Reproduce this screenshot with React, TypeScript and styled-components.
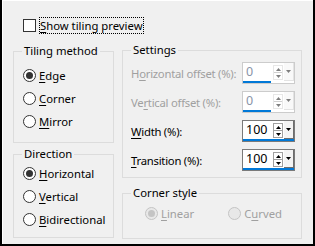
import React from 'react';
import styled, { createGlobalStyle, css } from 'styled-components';

const GlobalStyle = createGlobalStyle`
  html, body {
    margin: 0;
    padding: 0;
    background: #ffffff;
  }
  body {
    font-family: 'Noto Sans', 'Liberation Sans', sans-serif;
    font-size: 11.3px;
    color: #000;
    white-space: nowrap;
  }
`;

const Frame = styled.div`
  box-sizing: border-box;
  width: 315px;
  height: 246px;
  background: #f0f0f0;
  border: 2px solid #000;
  border-top: none;
  box-shadow: inset 1px 1px 0 #ffffff;
  padding: 17px 11px 0 11px;
  display: flex;
  flex-direction: column;
`;

const CheckRow = styled.label`
  display: flex;
  align-items: center;
  gap: 3px;
  height: 17px;
  padding-left: 10px;
`;

const CheckBox = styled.span`
  box-sizing: border-box;
  width: 13px;
  height: 13px;
  border: 1px solid #333;
  background: #fff;
`;

const Focus = styled.span`
  display: flex;
  align-items: center;
  height: 17px;
  padding: 0 1px;
  box-sizing: border-box;
  outline: 1px dotted #000;
  outline-offset: -1px;
  line-height: 17px;
`;

const Columns = styled.div`
  display: flex;
  gap: 8px;
  margin-top: 8px;
`;

const Column = styled.div<{ $width: number; $gap: number; $top?: number }>`
  display: flex;
  flex-direction: column;
  width: ${(p) => p.$width}px;
  gap: ${(p) => p.$gap}px;
  margin-top: ${(p) => p.$top ?? 0}px;
`;

const Group = styled.fieldset<{ $height: number }>`
  box-sizing: border-box;
  margin: 0;
  min-width: 0;
  height: ${(p) => p.$height}px;
  border: 1px solid #dcdcdc;
  padding: 0;
`;

const Legend = styled.legend`
  margin-left: 8px;
  padding: 0 2px;
  line-height: 16px;
  height: 16px;
  white-space: nowrap;
`;

const GroupBody = styled.div<{ $pad: string }>`
  padding: ${(p) => p.$pad};
`;

const Key = styled.span`
  text-decoration: underline;
  text-underline-offset: 2px;
`;

const RadioRow = styled.div<{ $disabled?: boolean }>`
  display: flex;
  align-items: center;
  gap: 3px;
  height: 23px;
  color: ${(p) => (p.$disabled ? '#a0a0a0' : '#000')};
`;

const Circle = styled.span<{ $checked?: boolean; $disabled?: boolean }>`
  box-sizing: border-box;
  flex: none;
  width: 13px;
  height: 13px;
  border-radius: 50%;
  border: 1px solid ${(p) => (p.$disabled ? '#c4c4c4' : '#333')};
  background: ${(p) => (p.$disabled ? '#e8e8e8' : '#fff')};
  display: flex;
  align-items: center;
  justify-content: center;

  &::after {
    content: '';
    width: 7px;
    height: 7px;
    border-radius: 50%;
    background: ${(p) => (p.$disabled ? '#c4c4c4' : '#333')};
    display: ${(p) => (p.$checked ? 'block' : 'none')};
  }
`;

const InlineRadios = styled.div`
  display: flex;
  gap: 34px;
`;

const FieldRow = styled.div<{ $disabled?: boolean }>`
  display: flex;
  align-items: center;
  justify-content: space-between;
  height: 22px;
  color: ${(p) => (p.$disabled ? '#a0a0a0' : '#000')};
`;

const FieldLabel = styled.span`
  letter-spacing: -0.25px;
`;

const FieldStack = styled.div`
  display: flex;
  flex-direction: column;
  gap: 7px;
`;

const Spin = styled.div<{ $disabled?: boolean }>`
  box-sizing: border-box;
  flex: none;
  width: 53px;
  height: 22px;
  border: 1px solid ${(p) => (p.$disabled ? '#cccccc' : '#7a7a7a')};
  background: #fff;
  display: flex;
  flex-direction: column;
`;

const SpinTop = styled.div`
  display: flex;
  flex: 1;
`;

const SpinValue = styled.span<{ $disabled?: boolean }>`
  width: 30px;
  padding-left: 3px;
  box-sizing: border-box;
  font-size: 12.5px;
  line-height: 18px;
  color: ${(p) => (p.$disabled ? '#8a94a8' : '#000')};
`;

const Arrows = styled.span<{ $disabled?: boolean }>`
  box-sizing: border-box;
  width: 10px;
  margin: 2px 0 1px 0;
  border: 1px solid ${(p) => (p.$disabled ? '#d0d0d0' : '#a0a0a0')};
  display: flex;
  flex-direction: column;
  ${(p) =>
    p.$disabled &&
    css`
      opacity: 0.5;
    `}
`;

const ArrowHalf = styled.span`
  flex: 1;
  display: flex;
  align-items: center;
  justify-content: center;

  & + & {
    border-top: 1px solid #a0a0a0;
  }
`;

const DropButton = styled.span<{ $disabled?: boolean }>`
  box-sizing: border-box;
  width: 10px;
  margin-left: 1px;
  background: #f4f4f4;
  border-right: 1px solid ${(p) => (p.$disabled ? '#c8c8c8' : '#6d6d6d')};
  border-bottom: 1px solid ${(p) => (p.$disabled ? '#c8c8c8' : '#6d6d6d')};
  display: flex;
  align-items: center;
  justify-content: center;
  ${(p) =>
    p.$disabled &&
    css`
      opacity: 0.5;
    `}
`;

const Bar = styled.span<{ $full?: boolean }>`
  display: block;
  height: 3px;
  width: ${(p) => (p.$full ? '100%' : '28px')};
  background: #0078d7;
`;

const Up = () => (
  <svg width="5" height="3" viewBox="0 0 5 3">
    <path d="M2.5 0 L5 3 L0 3 Z" fill="#000" />
  </svg>
);

const Down = () => (
  <svg width="5" height="3" viewBox="0 0 5 3">
    <path d="M0 0 L5 0 L2.5 3 Z" fill="#000" />
  </svg>
);

function SpinBox({ value, disabled }: { value: string; disabled?: boolean }) {
  return (
    <Spin $disabled={disabled}>
      <SpinTop>
        <SpinValue $disabled={disabled}>{value}</SpinValue>
        <Arrows $disabled={disabled}>
          <ArrowHalf>
            <Up />
          </ArrowHalf>
          <ArrowHalf>
            <Down />
          </ArrowHalf>
        </Arrows>
        <DropButton $disabled={disabled}>
          <Down />
        </DropButton>
      </SpinTop>
      <Bar $full={!disabled} />
    </Spin>
  );
}

function Radio({
  pre,
  k,
  post,
  checked,
  disabled,
}: {
  pre?: string;
  k: string;
  post: string;
  checked?: boolean;
  disabled?: boolean;
}) {
  return (
    <RadioRow $disabled={disabled}>
      <Circle $checked={checked} $disabled={disabled} />
      <span>
        {pre}
        <Key>{k}</Key>
        {post}
      </span>
    </RadioRow>
  );
}

export default function App() {
  return (
    <>
      <GlobalStyle />
      <Frame>
        <CheckRow>
          <CheckBox />
          <Focus>
            <Key>S</Key>how tiling preview
          </Focus>
        </CheckRow>

        <Columns>
          <Column $width={101} $gap={3} $top={1}>
            <Group $height={100}>
              <Legend>Tiling method</Legend>
              <GroupBody $pad="5px 0 0 9px">
                <Radio k="E" post="dge" checked />
                <Radio k="C" post="orner" />
                <Radio k="M" post="irror" />
              </GroupBody>
            </Group>
            <Group $height={92}>
              <Legend>Direction</Legend>
              <GroupBody $pad="0 0 0 9px">
                <Radio k="H" post="orizontal" checked />
                <Radio k="V" post="ertical" />
                <Radio k="B" post="idirectional" />
              </GroupBody>
            </Group>
          </Column>

          <Column $width={180} $gap={7}>
            <Group $height={136}>
              <Legend>Settings</Legend>
              <GroupBody $pad="4px 6px 0 8px">
                <FieldStack>
                  <FieldRow $disabled>
                    <FieldLabel>
                      H<Key>o</Key>rizontal offset (%):
                    </FieldLabel>
                    <SpinBox value="0" disabled />
                  </FieldRow>
                  <FieldRow $disabled>
                    <FieldLabel>
                      Ve<Key>r</Key>tical offset (%):
                    </FieldLabel>
                    <SpinBox value="0" disabled />
                  </FieldRow>
                  <FieldRow>
                    <FieldLabel>
                      <Key>W</Key>idth (%):
                    </FieldLabel>
                    <SpinBox value="100" />
                  </FieldRow>
                  <FieldRow>
                    <FieldLabel>
                      <Key>T</Key>ransition (%):
                    </FieldLabel>
                    <SpinBox value="100" />
                  </FieldRow>
                </FieldStack>
              </GroupBody>
            </Group>
            <Group $height={54}>
              <Legend>Corner style</Legend>
              <GroupBody $pad="1px 0 0 22px">
                <InlineRadios>
                  <Radio k="L" post="inear" checked disabled />
                  <Radio pre="C" k="u" post="rved" disabled />
                </InlineRadios>
              </GroupBody>
            </Group>
          </Column>
        </Columns>
      </Frame>
    </>
  );
}
